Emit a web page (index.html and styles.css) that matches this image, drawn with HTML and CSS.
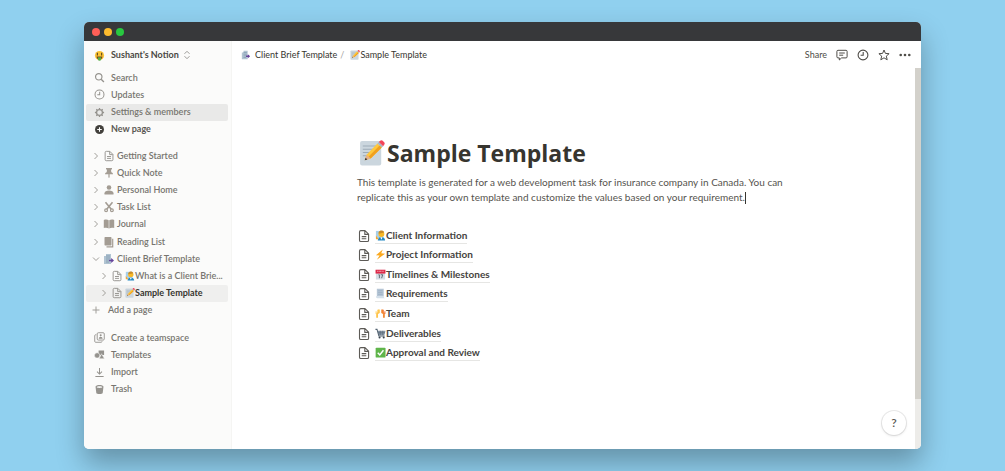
FILE: index.html
```html
<!DOCTYPE html>
<html lang="en">
<head>
<meta charset="utf-8">
<meta name="viewport" content="width=device-width, initial-scale=1">
<title>Sample Template</title>
<link rel="stylesheet" href="styles.css">
</head>
<body>
<svg class="sprite" aria-hidden="true">
  <symbol id="chev" viewBox="0 0 8 8"><path d="M2.5 1l3 3-3 3" fill="none" stroke="currentColor" stroke-width="1"/></symbol>
  <symbol id="page" viewBox="0 0 12 14"><path d="M3 1.6h4l3.6 3.6v6a1.3 1.3 0 0 1-1.3 1.3H2.8a1.3 1.3 0 0 1-1.3-1.3V2.9A1.3 1.3 0 0 1 2.8 1.6zM6.8 1.8v3.6h3.6M3.7 7.6h4.6M3.7 9.8h4.6" fill="none" stroke="currentColor" stroke-width="1.1" stroke-linejoin="round"/></symbol>
  <symbol id="clock" viewBox="0 0 12 12"><circle cx="6" cy="6" r="4.9" fill="none" stroke="currentColor" stroke-width="1.1"/><path d="M6.2 3v3.3H3.6" fill="none" stroke="currentColor" stroke-width="1.1"/></symbol>
  <symbol id="memo" viewBox="0 0 24 24"><rect x="1" y="1" width="19.5" height="22.5" rx="1.8" fill="#cbd6de"/><path d="M3.5 5.5h13M3.5 8.5h12M3.5 11.5h10M3.5 14.500h8" stroke="#9dabb7" stroke-width="1"/><path d="M5.300 18.800l1.700-5.300L17 3.200l4 3.800L10.800 17z" fill="#ffc83d"/><path d="M7 13.500l3.800 3.500-5.500 1.800z" fill="#e5b08a"/><path d="M5.300 18.800l.8-2.400 1.600 1.600z" fill="#333"/><path d="M9 15.300L19 5.100l2 1.900L10.800 17z" fill="#f0a020"/><path d="M17 3.200l1.300-1.300 4 3.800L21 7z" fill="#a9b8c2"/><path d="M18.300 1.900l1.200-1.200c.7-.7 1.700-.6 2.400 0l1.300 1.300c.7.700.7 1.700 0 2.400l-.9 1.300z" fill="#f3455a"/></symbol>
  <symbol id="brief" viewBox="0 0 12 12"><path d="M1 3h2V1h5v10H1z" fill="#b1c4d2"/><path d="M3 3h4M3 5h4M3 7h3M3 9h3" stroke="#7893aa" stroke-width=".7"/><path d="M6 6.700h2.200V5L11 7.500 8.200 10V8.300H6z" fill="#65439a"/></symbol>
  <symbol id="person" viewBox="0 0 12 12"><rect x="1" y="1" width="8" height="8" fill="#a8cfe9"/><circle cx="7" cy="4.300" r="3.200" fill="#f7b928"/><path d="M4 4V2.500C5 0 9 0 10 2.500L9 3z" fill="#c98b28"/><path d="M3 11.500c0-5 8-5 8 0z" fill="#258ac4"/><path d="M5.800 8h2.400L7 10.500z" fill="#fff"/><path d="M1 6l3 4H1z" fill="#f5a72b"/></symbol>
</svg>

<div class="window">
  <header class="titlebar"><span class="dot red"></span><span class="dot yellow"></span><span class="dot green"></span></header>
  <div class="app">
    <aside class="sidebar">
      <button class="row workspace">
        <svg class="ico" viewBox="0 0 12 12"><circle cx="6" cy="6" r="5" fill="#fcc436"/><path d="M3.700 3v3M8.300 3v3" stroke="#665020" stroke-width="1.300"/><path d="M2.800 7h6.400c0 2-1.400 3.400-3.200 3.400S2.800 9 2.800 7z" fill="#70451c"/><path d="M4.300 8h3.400v3c-.8.900-2.600.9-3.400 0z" fill="#5aae48"/></svg>
        <span>Sushant's Notion</span>
        <svg class="updown" viewBox="0 0 8 10"><path d="M1.500 3.800L4 1.300l2.500 2.500M1.500 6.200L4 8.700l2.500-2.500" fill="none" stroke="currentColor"/></svg>
      </button>
      <nav class="group quick" aria-label="Quick actions">
        <button class="row"><svg class="ico" viewBox="0 0 12 12"><circle cx="5.200" cy="5.200" r="3.500" fill="none" stroke="currentColor" stroke-width="1.300"/><path d="M7.800 7.800l3 3" stroke="currentColor" stroke-width="1.500"/></svg><span>Search</span></button>
        <button class="row"><svg class="ico"><use href="#clock"/></svg><span>Updates</span></button>
        <button class="row hover"><svg class="ico" viewBox="0 0 12 12"><circle cx="6" cy="6" r="3.200" fill="none" stroke="currentColor" stroke-width="1.400"/><path d="M6 1v1.800M6 9.200V11M1 6h1.800M9.200 6H11M2.500 2.500l1.200 1.200M8.300 8.300l1.200 1.200M2.500 9.500l1.200-1.200M8.300 3.700l1.200-1.200" stroke="currentColor" stroke-width="1.400"/></svg><span>Settings &amp; members</span></button>
        <button class="row dark"><svg class="ico" viewBox="0 0 12 12"><circle cx="6" cy="6" r="4.900" fill="currentColor"/><path d="M6 3.500v5M3.500 6h5" stroke="#fff" stroke-width="1.200"/></svg><span>New page</span></button>
      </nav>
      <nav class="group tree" aria-label="Pages">
        <a class="row" href="#"><svg class="chev"><use href="#chev"/></svg><svg class="ico"><use href="#page"/></svg><span>Getting Started</span></a>
        <a class="row" href="#"><svg class="chev"><use href="#chev"/></svg><svg class="ico warm" viewBox="0 0 12 12"><path d="M3 1h6v1.400H8l.3 2.800c1 .4 1.700 1 1.700 2.100H2c0-1.100.7-1.700 1.700-2.100L4 2.400H3zM5.400 7h1.200v3.200L6 11l-.6-.8z" fill="currentColor"/></svg><span>Quick Note</span></a>
        <a class="row" href="#"><svg class="chev"><use href="#chev"/></svg><svg class="ico warm" viewBox="0 0 12 12"><circle cx="6" cy="3.500" r="2.300" fill="currentColor"/><path d="M1.500 10.500V9.300C1.500 7.500 3.500 6.500 6 6.500s4.500 1 4.500 2.800v1.200z" fill="currentColor"/></svg><span>Personal Home</span></a>
        <a class="row" href="#"><svg class="chev"><use href="#chev"/></svg><svg class="ico warm" viewBox="0 0 12 12"><path d="M2.500 1.300l5.800 7M9.500 1.300l-5.800 7" stroke="currentColor" stroke-width="1.600"/><circle cx="3.100" cy="9.200" r="1.400" fill="none" stroke="currentColor" stroke-width="1.200"/><circle cx="8.900" cy="9.200" r="1.400" fill="none" stroke="currentColor" stroke-width="1.200"/></svg><span>Task List</span></a>
        <a class="row" href="#"><svg class="chev"><use href="#chev"/></svg><svg class="ico warm" viewBox="0 0 12 12"><path d="M.8 2c2-.7 3.700-.5 4.900.3v8.200C4.500 9.700 2.800 9.600.8 10.100zM11.200 2c-2-.7-3.700-.5-4.900.3v8.200c1.200-.8 2.900-.9 4.900-.4z" fill="currentColor"/></svg><span>Journal</span></a>
        <a class="row" href="#"><svg class="chev"><use href="#chev"/></svg><svg class="ico warm" viewBox="0 0 12 12"><rect x="1.500" y="1" width="7" height="8.500" rx=".7" fill="currentColor"/><path d="M9.700 2.800v8H3.500" fill="none" stroke="currentColor" stroke-width="1.200"/></svg><span>Reading List</span></a>
        <a class="row" href="#"><svg class="chev open"><use href="#chev"/></svg><svg class="ico"><use href="#brief"/></svg><span>Client Brief Template</span></a>
        <a class="row child" href="#"><svg class="chev"><use href="#chev"/></svg><svg class="ico"><use href="#page"/></svg><svg class="emoji"><use href="#person"/></svg><span>What is a Client Brie...</span></a>
        <a class="row child active" href="#"><svg class="chev"><use href="#chev"/></svg><svg class="ico"><use href="#page"/></svg><svg class="emoji"><use href="#memo"/></svg><span>Sample Template</span></a>
        <button class="row add"><svg class="chev" viewBox="0 0 8 8"><path d="M4 .5v7M.5 4h7" stroke="currentColor"/></svg><span>Add a page</span></button>
      </nav>
      <nav class="group tools" aria-label="Tools">
        <button class="row"><svg class="ico" viewBox="0 0 12 12"><rect x="3.500" y=".8" width="7.700" height="8" rx="1.200" fill="none" stroke="currentColor"/><path d="M2.500 3H1.800A1 1 0 0 0 .8 4v6.200a1 1 0 0 0 1 1h6a1 1 0 0 0 1-1" fill="none" stroke="currentColor"/><circle cx="7.300" cy="3.600" r="1.100" fill="currentColor"/><path d="M5.200 7.300c0-3 4.200-3 4.200 0z" fill="currentColor"/></svg><span>Create a teamspace</span></button>
        <button class="row"><svg class="ico" viewBox="0 0 12 12"><path d="M5 1.500h6v5H5z" fill="currentColor"/><circle cx="3.400" cy="7" r="2.900" fill="currentColor" stroke="#fbfbfa" stroke-width=".6"/><path d="M8.200 5.200l3.300 5.500H5.600z" fill="currentColor" stroke="#fbfbfa" stroke-width=".6"/></svg><span>Templates</span></button>
        <button class="row"><svg class="ico" viewBox="0 0 12 12"><path d="M6 1v6.500M3.300 5L6 7.700 8.700 5M1.500 10.300h9" fill="none" stroke="currentColor" stroke-width="1.100"/></svg><span>Import</span></button>
        <button class="row"><svg class="ico" viewBox="0 0 12 12"><path d="M1.700 3c0-2.400 8.600-2.400 8.600 0L9.500 9.800c-.4 1.400-6.600 1.400-7 0z" fill="currentColor"/><path d="M3 3.300c0-1 6-1 6 0 0 1.300-6 1.300-6 0z" fill="#fbfbfa"/></svg><span>Trash</span></button>
      </nav>
    </aside>

    <main class="main">
      <div class="topbar">
        <nav class="crumbs" aria-label="Breadcrumb">
          <a href="#"><svg class="crumb-ico"><use href="#brief"/></svg><span>Client Brief Template</span></a><i>/</i>
          <a href="#" class="here"><svg class="emoji"><use href="#memo"/></svg><span>Sample Template</span></a>
        </nav>
        <div class="actions">
          <button class="share">Share</button>
          <button aria-label="Comments"><svg class="ico" viewBox="0 0 12 12"><path d="M2 1.300h8a1.100 1.100 0 0 1 1.100 1.100v5.400A1.100 1.100 0 0 1 10 8.900H5.600L3.300 11V8.900H2A1.100 1.100 0 0 1 .9 7.800V2.400A1.100 1.100 0 0 1 2 1.300zM3.200 4h5.600M3.200 6.200h4" fill="none" stroke="currentColor"/></svg></button>
          <button aria-label="History"><svg class="ico"><use href="#clock"/></svg></button>
          <button aria-label="Favorite"><svg class="ico" viewBox="0 0 12 12"><path d="M6 1l1.400 3.400 3.700.3-2.800 2.400.9 3.700L6 8.800l-3.200 2 .9-3.700L.9 4.700l3.700-.3z" fill="none" stroke="currentColor" stroke-linejoin="round"/></svg></button>
          <button aria-label="More"><svg class="ico" viewBox="0 0 12 12"><g fill="currentColor"><circle cx="1.700" cy="6" r="1.300"/><circle cx="6" cy="6" r="1.300"/><circle cx="10.300" cy="6" r="1.300"/></g></svg></button>
        </div>
      </div>
      <div class="scroller">
        <article class="doc">
          <h1><svg class="title-emoji"><use href="#memo"/></svg><span>Sample Template</span></h1>
          <p>This template is generated for a web development task for insurance company in Canada. You can replicate this as your own template and customize the values based on your requirement.<span class="caret"></span></p>
          <ul class="links">
            <li><a href="#"><svg class="page"><use href="#page"/></svg><span class="label"><svg class="emoji"><use href="#person"/></svg>Client Information</span></a></li>
            <li><a href="#"><svg class="page"><use href="#page"/></svg><span class="label"><svg class="emoji" viewBox="0 0 12 12"><path d="M8.500 .5L1 6.800l4 .4-3 4.500 9-6.600-4.200-.4z" fill="#fba91e"/></svg>Project Information</span></a></li>
            <li><a href="#"><svg class="page"><use href="#page"/></svg><span class="label"><svg class="emoji" viewBox="0 0 12 12"><path d="M1 1h10v10.500H1z" fill="#d5dde5"/><path d="M.6.800h10.800V5H.6z" fill="#dd2848"/><path d="M2.500 2.500h7" stroke="#fff" stroke-width=".8" stroke-dasharray="1 .6"/><path d="M3.800 6.300h1V10M6.300 6.300h2.200L7.200 10" fill="none" stroke="#4b5764" stroke-width=".9"/></svg>Timelines &amp; Milestones</span></a></li>
            <li><a href="#"><svg class="page"><use href="#page"/></svg><span class="label"><svg class="emoji" viewBox="0 0 12 12"><path d="M2 .8h7.500v8.500H2z" fill="#b5c5d5"/><path d="M1 9h8.500c0 1 .5 2 1.500 2.200H2.500C1.500 11 1 10 1 9z" fill="#d4e0ea"/><path d="M3.300 3h4.900M3.300 5h4.900M3.300 7h4.900" stroke="#94a9bf" stroke-width=".6"/></svg>Requirements</span></a></li>
            <li><a href="#"><svg class="page"><use href="#page"/></svg><span class="label"><svg class="emoji" viewBox="0 0 12 12"><path d="M4.200 1.500v3.300L2.300 6v4.500" fill="none" stroke="#ffc34a" stroke-width="2"/><path d="M1.200 3.500v3M3 2v3" stroke="#ffd36b" stroke-width="1.100"/><path d="M7.800 1.500v3.300L9.700 6v4.500" fill="none" stroke="#f58a32" stroke-width="2"/><path d="M10.800 3.500v3M9 2v3" stroke="#ef6f35" stroke-width="1.100"/></svg>Team</span></a></li>
            <li><a href="#"><svg class="page"><use href="#page"/></svg><span class="label"><svg class="emoji" viewBox="0 0 12 12"><path d="M2.800 3h8.700l-1.300 4.800H4z" fill="#8695a3"/><path d="M.5 1.500h1.700l2 7.300h6.300" fill="none" stroke="#52616f" stroke-width="1.100"/><path d="M3.300 5.200h7.500M5.700 3v4.700M8.400 3v4.700" stroke="#52616f" stroke-width=".6"/><circle cx="5" cy="10.400" r="1.100" fill="#394550"/><circle cx="9.500" cy="10.400" r="1.100" fill="#394550"/></svg>Deliverables</span></a></li>
            <li><a href="#"><svg class="page"><use href="#page"/></svg><span class="label"><svg class="emoji" viewBox="0 0 12 12"><rect x=".7" y=".7" width="10.800" height="10.800" rx="1" fill="#5fb54a"/><path d="M3 6.300l2.200 2.300 4-5" fill="none" stroke="#fff" stroke-width="1.600"/></svg>Approval and Review</span></a></li>
          </ul>
        </article>
        <div class="track"><div class="thumb"></div></div>
        <button class="help" aria-label="Help">?</button>
      </div>
    </main>
  </div>
</div>
</body>
</html>
```
FILE: styles.css
```css
* { box-sizing: border-box; }
body {
  margin: 0;
  min-height: 100vh;
  padding: 22px 84px;
  display: flex;
  background: #90d0ef;
  color: #37352f;
  font: 9px/16px Lato, "Open Sans", sans-serif;
}
button { border: 0; padding: 0; background: none; color: inherit; font: inherit; cursor: pointer; }
a { color: inherit; text-decoration: none; }
svg { flex: none; }
.sprite { position: absolute; width: 0; height: 0; }

.window {
  flex: 1;
  min-width: 0;
  display: flex;
  flex-direction: column;
  border-radius: 5px;
  overflow: hidden;
  background: #fff;
  box-shadow: 0 14px 28px rgba(0, 0, 0, .3);
}
.titlebar { display: flex; align-items: center; gap: 4px; height: 19px; padding-left: 8px; background: #37383a; }
.dot { width: 8px; height: 8px; border-radius: 50%; }
.red { background: #ff5f57; }
.yellow { background: #febc2e; }
.green { background: #28c840; }
.app { flex: 1; display: flex; }

.sidebar {
  width: 148px;
  flex: none;
  padding: 6px 3px 0 2px;
  background: #fbfbfa;
  border-right: 1px solid #f5f5f3;
  color: #77756f;
  font-weight: 600;
}
.row {
  display: flex;
  align-items: center;
  width: 100%;
  min-width: 0;
  padding: 0 4px 0 8px;
  border-radius: 2px;
  text-align: left;
  white-space: nowrap;
}
.row .ico { width: 11px; height: 11px; margin-right: 6px; color: #95938e; }
.row .ico.warm { color: #a39c93; }
.workspace { color: #4a4843; font-weight: 700; }
.updown { width: 8px; height: 10px; margin-left: 4px; color: #9b9a97; }
.group { display: grid; grid-auto-rows: 1fr; }
.quick { min-height: 69px; margin-top: 6px; }
.tree { min-height: 172px; margin-top: 9px; }
.tools { min-height: 69px; margin-top: 10px; }
.hover { background: #e9e9e8; }
.dark { color: #5a5853; font-weight: 700; }
.row.dark .ico { color: #42403c; }
.tree .row { padding-left: 6px; }
.chev { width: 8px; height: 8px; margin-right: 3px; color: #a09e99; }
.open { transform: rotate(90deg); }
.tree .ico { width: 12px; height: 12px; margin-right: 2px; }
.tree .child { padding-left: 14px; }
.active { background: #efefee; color: #37352f; font-weight: 700; }
.emoji { width: 10px; height: 10px; }
.tree .add .chev { margin-right: 8px; }

.main { flex: 1; min-width: 0; display: flex; flex-direction: column; }
.topbar { display: flex; align-items: center; justify-content: space-between; height: 27px; padding: 0 10px 0 9px; }
.crumbs, .crumbs a { display: flex; align-items: center; }
.crumbs i { margin: 0 6px 0 3px; color: #a5a4a0; font-style: normal; }
.crumb-ico { width: 10px; height: 10px; margin-right: 4px; }
.actions { display: flex; align-items: center; gap: 9px; color: #4f4d48; }
.actions .ico { display: block; width: 12px; height: 12px; }

.scroller { flex: 1; display: flex; position: relative; }
.doc { flex: 1; min-width: 0; max-width: 683px; margin: 0 auto; padding: 68px 125px 20px; }
h1 { display: flex; align-items: center; margin: 0; font: 700 23px/34px "Open Sans", "Noto Sans", sans-serif; }
.title-emoji { width: 26px; height: 26px; margin: 0 2px 0 2px; }
.doc p { margin: 5px 0 0; font-size: 10px; line-height: 15px; color: #55534e; }
.caret { display: inline-block; width: 1px; height: 12px; vertical-align: middle; background: #37352f; }
.links { display: grid; grid-auto-rows: 1fr; min-height: 137px; margin: 21px 0 0; padding: 0; list-style: none; font-size: 10px; font-weight: 700; color: #45433e; }
.links li, .links a { display: flex; align-items: center; }
.page { width: 12px; height: 14px; margin: 0 5px 0 1px; color: #5c5a56; }
.label { display: flex; align-items: center; line-height: 15px; border-bottom: 1px solid #e6e6e4; }
.label .emoji { width: 11px; height: 11px; }

.track { width: 6px; flex: none; background: #edece9; }
.thumb { height: 87%; background: #d3d1cb; }
.help {
  position: absolute;
  right: 15px;
  bottom: 14px;
  width: 24px;
  height: 24px;
  border-radius: 50%;
  background: #fff;
  box-shadow: 0 0 0 1px rgba(15, 15, 15, .08), 0 1px 3px rgba(15, 15, 15, .12);
  font-size: 12px;
  font-weight: 600;
  color: #5a5853;
}
```
